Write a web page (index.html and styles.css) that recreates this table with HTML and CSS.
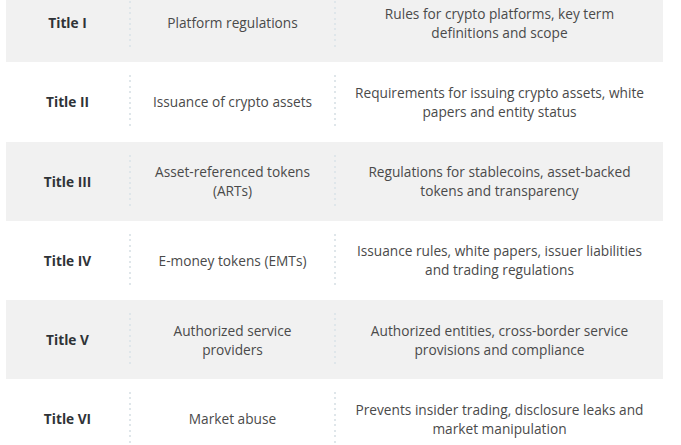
FILE: index.html
```html
<!DOCTYPE html>
<html lang="en">
<head>
<meta charset="utf-8">
<title>MiCA titles</title>
<link rel="stylesheet" href="styles.css">
</head>
<body>
<div class="viewport">
  <div class="table">
    <div class="row shaded">
      <div class="cell title">Title I</div>
      <div class="divider"></div>
      <div class="cell topic">Platform regulations</div>
      <div class="divider"></div>
      <div class="cell desc">Rules for crypto platforms, key term definitions and scope</div>
    </div>
    <div class="row">
      <div class="cell title">Title II</div>
      <div class="divider"></div>
      <div class="cell topic">Issuance of crypto assets</div>
      <div class="divider"></div>
      <div class="cell desc">Requirements for issuing crypto assets, white papers and entity status</div>
    </div>
    <div class="row shaded">
      <div class="cell title">Title III</div>
      <div class="divider"></div>
      <div class="cell topic">Asset-referenced tokens (ARTs)</div>
      <div class="divider"></div>
      <div class="cell desc">Regulations for stablecoins, asset-backed tokens and transparency</div>
    </div>
    <div class="row">
      <div class="cell title">Title IV</div>
      <div class="divider"></div>
      <div class="cell topic">E-money tokens (EMTs)</div>
      <div class="divider"></div>
      <div class="cell desc">Issuance rules, white papers, issuer liabilities and trading regulations</div>
    </div>
    <div class="row shaded">
      <div class="cell title">Title V</div>
      <div class="divider"></div>
      <div class="cell topic">Authorized service providers</div>
      <div class="divider"></div>
      <div class="cell desc">Authorized entities, cross-border service provisions and compliance</div>
    </div>
    <div class="row">
      <div class="cell title">Title VI</div>
      <div class="divider"></div>
      <div class="cell topic">Market abuse</div>
      <div class="divider"></div>
      <div class="cell desc">Prevents insider trading, disclosure leaks and market manipulation</div>
    </div>
  </div>
</div>
</body>
</html>
```
FILE: styles.css
```css
html, body {
  margin: 0;
  padding: 0;
  background: #ffffff;
}

.viewport {
  height: 445px;
  overflow: hidden;
}

.table {
  margin: -17px 0 0 6px;
  width: 657px;
  font-family: "Open Sans", "Liberation Sans", sans-serif;
  font-size: 13.7px;
  line-height: 19px;
  color: #4a4a4a;
}

.row {
  display: grid;
  grid-template-columns: 123px 2px 203px 2px 327px;
  height: 79.25px;
}

.row.shaded {
  background: #f1f1f1;
}

.cell {
  display: flex;
  align-items: center;
  justify-content: center;
  text-align: center;
}

.title {
  font-weight: 700;
  color: #2f3337;
}

.topic {
  padding: 0 16px;
}

.desc {
  padding: 0 16px;
}

.divider {
  margin: 13px 0;
  width: 2px;
  background-image: repeating-linear-gradient(to bottom, #dfe6ea 0 2px, transparent 2px 5.4px);
}
```
